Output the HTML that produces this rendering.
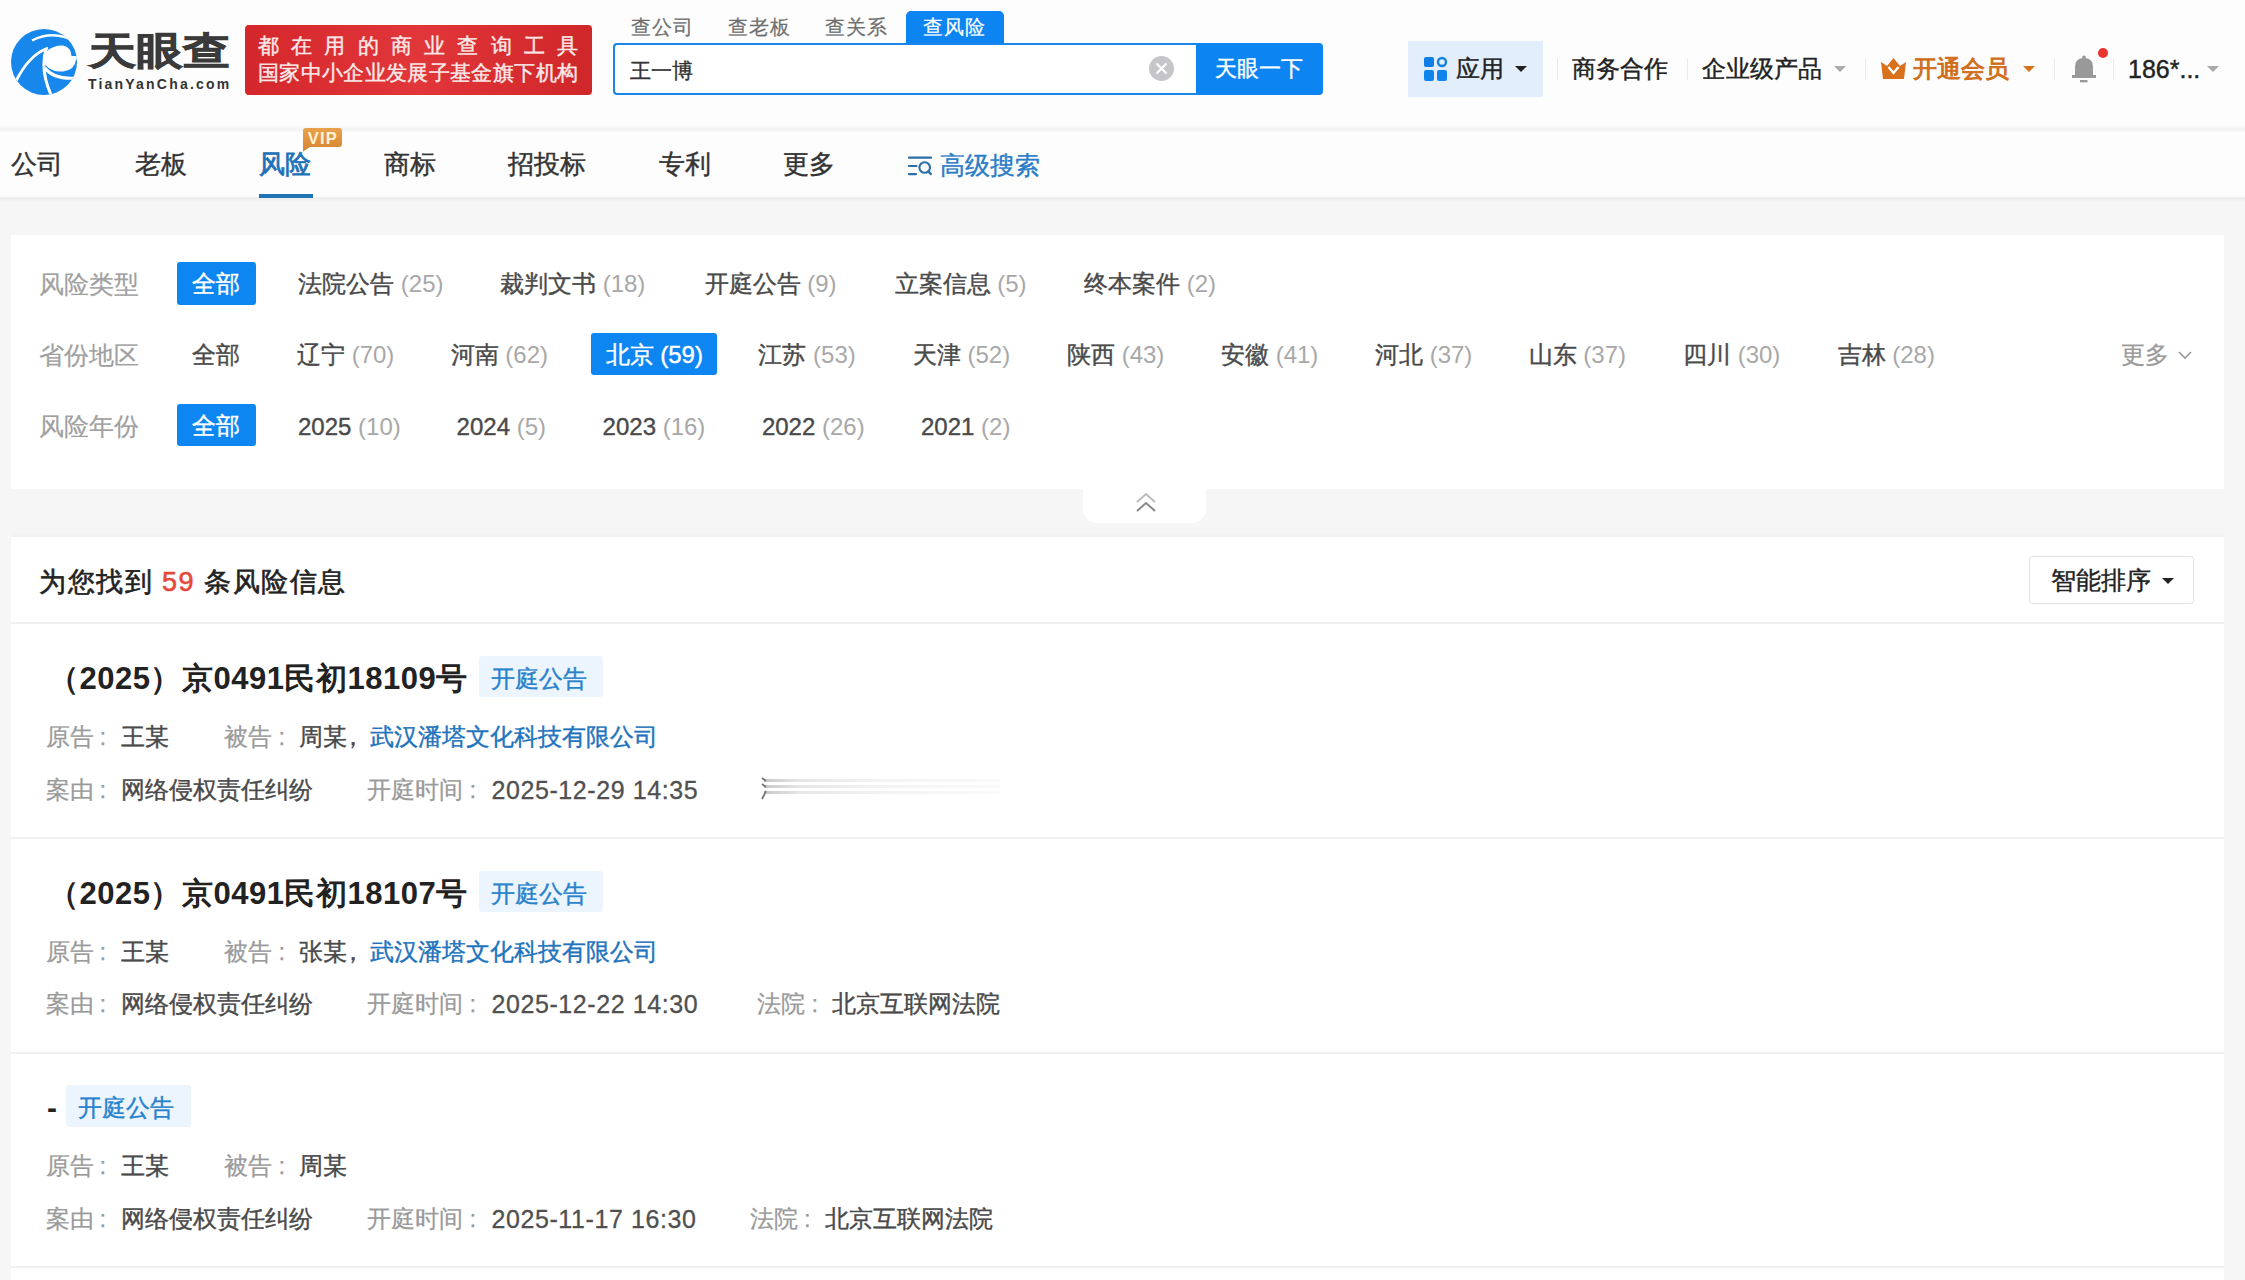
<!DOCTYPE html>
<html><head><meta charset="utf-8">
<style>
html,body{margin:0;padding:0;}
body{width:2245px;height:1280px;overflow:hidden;position:relative;background:#f6f6f6;font-family:"Liberation Sans",sans-serif;color:#333;}
.a{position:absolute;white-space:nowrap;line-height:1;}
.box{position:absolute;}
.g{color:#999;}
.n{color:#999;}
.c{margin-left:6px;}
.m{-webkit-text-stroke:0.6px currentColor;}
.s{-webkit-text-stroke:0.4px currentColor;}
.sep{position:absolute;width:1px;height:22px;background:#ebebeb;top:58px;}
.caret{position:absolute;width:0;height:0;border-left:6px solid transparent;border-right:6px solid transparent;border-top:6px solid #333;}
</style></head>
<body>
<!-- header -->
<div class="box" style="left:0;top:0;width:2245px;height:128px;background:#fdfdfd;"></div>
<div class="box" style="left:0;top:126px;width:2245px;height:8px;background:linear-gradient(#fcfcfc,#f2f2f2 35%,#f3f3f3 50%,#fdfdfd);"></div>
<div class="box" style="left:0;top:132px;width:2245px;height:66px;background:#fdfdfd;"></div>
<div class="box" style="left:0;top:197px;width:2245px;height:6px;background:linear-gradient(#ebebeb,#f6f6f6);"></div>

<!-- logo -->
<svg class="box" style="left:5px;top:22px" width="80" height="80" viewBox="0 0 80 80">
  <defs><clipPath id="cc"><circle cx="39" cy="40" r="33"/></clipPath></defs>
  <circle cx="39" cy="40" r="33" fill="#1787ec"/>
  <g clip-path="url(#cc)">
    <path d="M42 29 Q49 23 58 23.5 Q66 25 66.5 34 L74 34 L74 37.5 L71 37.5 Q70 48 58 49.5 Q47 50.5 40.5 43 Q38 35 42 29 Z" fill="#fff"/>
    <g fill="none" stroke="#fff" stroke-linecap="butt">
      <path d="M27 18.5 Q50 7 72 21" stroke-width="2.4"/>
      <path d="M11 59 Q24 33 43 26" stroke-width="2.8"/>
      <path d="M41 27 Q35 48 46 73" stroke-width="3"/>
      <path d="M40 46 Q49 58 72 56" stroke-width="3"/>
    </g>
  </g>
</svg>
<div class="a" style="left:89px;top:32px;font-size:46px;font-weight:900;color:#3a3a3a;-webkit-text-stroke:1px #3a3a3a;transform-origin:0 0;transform:scale(1.018,0.823);letter-spacing:0px">天眼查</div>
<div class="a" style="left:88px;top:77px;font-size:14px;font-weight:bold;color:#333;letter-spacing:2.2px">TianYanCha.com</div>

<!-- red badge -->
<div class="box" style="left:245px;top:25px;width:347px;height:70px;border-radius:4px;background:linear-gradient(90deg,#d3272b,#e1363a 50%,#cf2629);"></div>
<div class="a s" style="left:258px;top:35px;width:320px;font-size:21px;color:#fbe9e9;display:flex;justify-content:space-between"><span>都</span><span>在</span><span>用</span><span>的</span><span>商</span><span>业</span><span>查</span><span>询</span><span>工</span><span>具</span></div>
<div class="a s" style="left:258px;top:63px;font-size:21.3px;color:#fbe9e9;letter-spacing:0.35px">国家中小企业发展子基金旗下机构</div>

<!-- search tabs -->
<div class="a" style="left:631px;top:17px;font-size:20px;letter-spacing:1.2px;color:#6e6e6e;-webkit-text-stroke:0.2px currentColor">查公司</div>
<div class="a" style="left:728px;top:17px;font-size:20px;letter-spacing:1.2px;color:#6e6e6e;-webkit-text-stroke:0.2px currentColor">查老板</div>
<div class="a" style="left:825px;top:17px;font-size:20px;letter-spacing:1.2px;color:#6e6e6e;-webkit-text-stroke:0.2px currentColor">查关系</div>
<div class="box" style="left:906px;top:11px;width:98px;height:34px;background:#0c85f2;border-radius:5px 5px 0 0"></div>
<div class="a" style="left:923px;top:17px;font-size:20px;letter-spacing:1.2px;color:#fff;-webkit-text-stroke:0.2px currentColor">查风险</div>

<!-- search box -->
<div class="box" style="left:613px;top:43px;width:583px;height:52px;box-sizing:border-box;border:2px solid #1a86ec;border-right:none;border-radius:4px 0 0 4px;background:#fff"></div>
<div class="a s" style="left:630px;top:60px;font-size:21px;color:#333">王一博</div>
<div class="box" style="left:1149px;top:56px;width:25px;height:25px;border-radius:50%;background:#c6c6ca"></div>
<svg class="box" style="left:1149px;top:56px" width="25" height="25"><path d="M7.5 7.5 L17.5 17.5 M17.5 7.5 L7.5 17.5" stroke="#fff" stroke-width="2.2"/></svg>
<div class="box" style="left:1196px;top:43px;width:127px;height:52px;background:#0c85f2;border-radius:0 4px 4px 0"></div>
<div class="a s" style="left:1215px;top:59px;font-size:21.5px;color:#fff">天眼一下</div>

<!-- right header -->
<div class="box" style="left:1408px;top:41px;width:135px;height:56px;background:#e2eefb"></div>
<svg class="box" style="left:1422px;top:55px" width="28" height="28" viewBox="0 0 28 28">
  <rect x="2" y="2" width="10" height="10" rx="2" fill="#0f7fe6"/>
  <circle cx="20" cy="7" r="4" fill="none" stroke="#1282e0" stroke-width="2.4"/>
  <rect x="2" y="15" width="10" height="11" rx="2" fill="#0f84ec"/>
  <rect x="15" y="15" width="10" height="11" rx="2" fill="#0f84ec"/>
</svg>
<div class="a s" style="left:1456px;top:57px;font-size:24px;color:#222">应用</div>
<div class="caret" style="left:1515px;top:66px;border-top-color:#222"></div>
<div class="sep" style="left:1557px"></div>
<div class="a s" style="left:1572px;top:57px;font-size:24px;color:#222">商务合作</div>
<div class="sep" style="left:1687px"></div>
<div class="a s" style="left:1702px;top:57px;font-size:24px;color:#222">企业级产品</div>
<div class="caret" style="left:1834px;top:66px;border-top-color:#aaa"></div>
<div class="sep" style="left:1865px"></div>
<svg class="box" style="left:1880px;top:57px" width="27" height="23" viewBox="0 0 27 23">
  <path d="M1 5 L7 9 L13.5 1 L20 9 L26 5 L24 22 L3 22 Z" fill="#d9711c"/>
  <path d="M8.5 10 L13.5 16 L18.5 10" fill="none" stroke="#fff" stroke-width="2.4"/>
</svg>
<div class="a m" style="left:1913px;top:57px;font-size:24px;color:#d06d1a;-webkit-text-stroke:0.9px #d06d1a">开通会员</div>
<div class="caret" style="left:2023px;top:66px;border-top-color:#d8731b"></div>
<div class="sep" style="left:2054px"></div>
<svg class="box" style="left:2070px;top:54px" width="30" height="32" viewBox="0 0 30 32">
  <circle cx="14" cy="3.2" r="1.8" fill="#999"/>
  <path d="M5 23 L5 13 Q5 4 14 4 Q23 4 23 13 L23 23 Z" fill="#999"/>
  <rect x="2" y="21" width="24" height="3" fill="#999"/>
  <rect x="10" y="26" width="7.5" height="2.3" fill="#999"/>
</svg>
<div class="box" style="left:2098px;top:48px;width:10px;height:10px;border-radius:50%;background:#ea3430"></div>
<div class="sep" style="left:2113px"></div>
<div class="a s" style="left:2128px;top:57px;font-size:25px;color:#222">186*...</div>
<div class="caret" style="left:2207px;top:66px;border-top-color:#aaa"></div>

<!-- nav -->
<div class="a s" style="left:11px;top:151px;font-size:26px;color:#333">公司</div>
<div class="a s" style="left:135px;top:151px;font-size:26px;color:#333">老板</div>
<div class="a m" style="left:259px;top:151px;font-size:26px;color:#1f72b8;-webkit-text-stroke:0.8px #1f72b8;">风险</div>
<div class="box" style="left:259px;top:194px;width:54px;height:4px;background:#2174b4"></div>
<svg class="box" style="left:300px;top:126px" width="46" height="28" viewBox="0 0 46 28">
  <defs><linearGradient id="vg" x1="0" x2="0" y1="0" y2="1"><stop offset="0" stop-color="#e9a24c"/><stop offset="1" stop-color="#d9832e"/></linearGradient></defs>
  <path d="M6 2 H39 Q42 2 42 5 V18 Q42 21 39 21 H10 L3 25.5 V5 Q3 2 6 2 Z" fill="url(#vg)"/>
  <text x="22.8" y="17.6" font-family="Liberation Sans" font-weight="bold" font-size="16.5" letter-spacing="1.2" fill="#fff3d6" text-anchor="middle">VIP</text>
</svg>
<div class="a s" style="left:384px;top:151px;font-size:26px;color:#333">商标</div>
<div class="a s" style="left:508px;top:151px;font-size:26px;color:#333">招投标</div>
<div class="a s" style="left:659px;top:151px;font-size:26px;color:#333">专利</div>
<div class="a s" style="left:783px;top:151px;font-size:26px;color:#333">更多</div>
<svg class="box" style="left:905px;top:152px" width="30" height="26" viewBox="0 0 30 26">
  <path d="M4 5.7 H26 M4 14 H11.5 M4 22.2 H11" stroke="#2a6fa8" stroke-width="2.2" stroke-linecap="round"/>
  <circle cx="19.7" cy="15.5" r="5.3" fill="none" stroke="#2a6fa8" stroke-width="2.1"/>
  <path d="M23.4 19.4 L25.8 22" stroke="#2a6fa8" stroke-width="2.4" stroke-linecap="round"/>
</svg>
<div class="a s" style="left:940px;top:153px;font-size:25px;color:#2a7cc6">高级搜索</div>

<!-- filter card -->
<div class="box" style="left:11px;top:235px;width:2213px;height:254px;background:#fff"></div>
<div class="box" style="left:1083px;top:488px;width:123px;height:35px;background:#fff;border-radius:0 0 14px 14px"></div>
<svg class="box" style="left:1134px;top:491px" width="24" height="24" viewBox="0 0 24 24">
  <path d="M3 11 L12 3 L21 11" fill="none" stroke="#bbb" stroke-width="2"/>
  <path d="M3 20 L12 12 L21 20" fill="none" stroke="#888" stroke-width="2"/>
</svg>

<div class="a s" style="left:39px;top:271.5px;font-size:25px;color:#a0a0a0;-webkit-text-stroke:0.2px currentColor">风险类型</div>
<div class="a s" style="left:39px;top:342.5px;font-size:25px;color:#a0a0a0;-webkit-text-stroke:0.2px currentColor">省份地区</div>
<div class="a s" style="left:39px;top:413.5px;font-size:25px;color:#a0a0a0;-webkit-text-stroke:0.2px currentColor">风险年份</div>
<div class="box" style="left:177px;top:262px;width:79px;height:43px;background:#0d86f2;border-radius:3px"></div>
<div class="a s" style="left:191.6px;top:272px;font-size:24px;color:#fff;">全部</div>
<div class="a s" style="left:298.2px;top:272px;font-size:24px;color:#4a4a4a">法院公告 <span style="color:#a8a8a8;-webkit-text-stroke:0px currentColor">(25)</span></div>
<div class="a s" style="left:500px;top:272px;font-size:24px;color:#4a4a4a">裁判文书 <span style="color:#a8a8a8;-webkit-text-stroke:0px currentColor">(18)</span></div>
<div class="a s" style="left:704.5px;top:272px;font-size:24px;color:#4a4a4a">开庭公告 <span style="color:#a8a8a8;-webkit-text-stroke:0px currentColor">(9)</span></div>
<div class="a s" style="left:894.6px;top:272px;font-size:24px;color:#4a4a4a">立案信息 <span style="color:#a8a8a8;-webkit-text-stroke:0px currentColor">(5)</span></div>
<div class="a s" style="left:1084px;top:272px;font-size:24px;color:#4a4a4a">终本案件 <span style="color:#a8a8a8;-webkit-text-stroke:0px currentColor">(2)</span></div>
<div class="a s" style="left:191.6px;top:343px;font-size:24px;color:#4a4a4a;">全部</div>
<div class="box" style="left:591px;top:333px;width:126px;height:42px;background:#0d86f2;border-radius:3px"></div>
<div class="a s" style="left:297px;top:343px;font-size:24px;color:#4a4a4a">辽宁 <span style="color:#a8a8a8;-webkit-text-stroke:0px currentColor">(70)</span></div>
<div class="a s" style="left:450.7px;top:343px;font-size:24px;color:#4a4a4a">河南 <span style="color:#a8a8a8;-webkit-text-stroke:0px currentColor">(62)</span></div>
<div class="a s" style="left:605.6px;top:343px;font-size:24px;color:#fff">北京 <span style="color:#fff;-webkit-text-stroke:0.4px currentColor">(59)</span></div>
<div class="a s" style="left:758.4px;top:343px;font-size:24px;color:#4a4a4a">江苏 <span style="color:#a8a8a8;-webkit-text-stroke:0px currentColor">(53)</span></div>
<div class="a s" style="left:912.8px;top:343px;font-size:24px;color:#4a4a4a">天津 <span style="color:#a8a8a8;-webkit-text-stroke:0px currentColor">(52)</span></div>
<div class="a s" style="left:1067px;top:343px;font-size:24px;color:#4a4a4a">陕西 <span style="color:#a8a8a8;-webkit-text-stroke:0px currentColor">(43)</span></div>
<div class="a s" style="left:1221px;top:343px;font-size:24px;color:#4a4a4a">安徽 <span style="color:#a8a8a8;-webkit-text-stroke:0px currentColor">(41)</span></div>
<div class="a s" style="left:1375px;top:343px;font-size:24px;color:#4a4a4a">河北 <span style="color:#a8a8a8;-webkit-text-stroke:0px currentColor">(37)</span></div>
<div class="a s" style="left:1528.7px;top:343px;font-size:24px;color:#4a4a4a">山东 <span style="color:#a8a8a8;-webkit-text-stroke:0px currentColor">(37)</span></div>
<div class="a s" style="left:1683px;top:343px;font-size:24px;color:#4a4a4a">四川 <span style="color:#a8a8a8;-webkit-text-stroke:0px currentColor">(30)</span></div>
<div class="a s" style="left:1837.6px;top:343px;font-size:24px;color:#4a4a4a">吉林 <span style="color:#a8a8a8;-webkit-text-stroke:0px currentColor">(28)</span></div>
<div class="a s" style="left:2120.5px;top:343px;font-size:24px;color:#9a9a9a;-webkit-text-stroke:0.25px currentColor">更多</div>
<svg class="box" style="left:2176px;top:348px" width="18" height="14" viewBox="0 0 18 14"><path d="M3 4 L9 10 L15 4" fill="none" stroke="#999" stroke-width="1.6"/></svg>
<div class="box" style="left:177px;top:404px;width:79px;height:42px;background:#0d86f2;border-radius:3px"></div>
<div class="a s" style="left:191.6px;top:414px;font-size:24px;color:#fff;">全部</div>
<div class="a s" style="left:298px;top:415px;font-size:24px;color:#4a4a4a">2025 <span style="color:#a8a8a8;-webkit-text-stroke:0px currentColor">(10)</span></div>
<div class="a s" style="left:456.6px;top:415px;font-size:24px;color:#4a4a4a">2024 <span style="color:#a8a8a8;-webkit-text-stroke:0px currentColor">(5)</span></div>
<div class="a s" style="left:602.6px;top:415px;font-size:24px;color:#4a4a4a">2023 <span style="color:#a8a8a8;-webkit-text-stroke:0px currentColor">(16)</span></div>
<div class="a s" style="left:761.9px;top:415px;font-size:24px;color:#4a4a4a">2022 <span style="color:#a8a8a8;-webkit-text-stroke:0px currentColor">(26)</span></div>
<div class="a s" style="left:921px;top:415px;font-size:24px;color:#4a4a4a">2021 <span style="color:#a8a8a8;-webkit-text-stroke:0px currentColor">(2)</span></div>
<div class="box shadow-r" style="left:11px;top:531px;width:2213px;height:6px;background:linear-gradient(#f6f6f6,#f1f1f1)"></div>


<!-- results card -->
<div class="box" style="left:11px;top:537px;width:2213px;height:743px;background:#fff"></div>
<div class="a m" style="left:39px;top:569px;font-size:27px;color:#222;letter-spacing:1.5px">为您找到 <span style="color:#e4483d">59</span> 条风险信息</div>
<div class="box" style="left:2029px;top:556px;width:165px;height:48px;box-sizing:border-box;border:1px solid #e3e3e3;border-radius:3px;background:#fff"></div>
<div class="a s" style="left:2051px;top:569px;font-size:24.5px;color:#222;">智能排序</div>
<div class="caret" style="left:2162px;top:578px;border-width:6px 6px 0 6px;border-top-color:#222"></div>
<div class="box" style="left:11px;top:622px;width:2213px;height:2px;background:#f0f0f0"></div>
<div class="a" style="left:48px;top:663px;font-size:31px;color:#222;font-weight:bold;letter-spacing:0.5px">（2025）京0491民初18109号</div>
<div class="box" style="left:479px;top:656.4px;width:124px;height:41px;background:#ecf5fd;border-radius:3px"></div>
<div class="a s" style="left:491.4px;top:667.0px;font-size:24px;color:#2983cc;">开庭公告</div>
<div class="a s" style="left:45.5px;top:725px;font-size:24px;color:#9a9a9a;-webkit-text-stroke:0.25px currentColor">原告<span class=c>:</span></div>
<div class="a s" style="left:120.5px;top:725px;font-size:24px;color:#4a4a4a;">王某</div>
<div class="a s" style="left:224.4px;top:725px;font-size:24px;color:#9a9a9a;-webkit-text-stroke:0.25px currentColor">被告<span class=c>:</span></div>
<div class="a s" style="left:298.9px;top:725px;font-size:24px;color:#4a4a4a;">周某<span style="margin-left:-6px">，</span></div>
<div class="a s" style="left:370.4px;top:725px;font-size:24px;color:#1f74bd;">武汉潘塔文化科技有限公司</div>
<div class="a s" style="left:45.5px;top:777.5px;font-size:24px;color:#9a9a9a;-webkit-text-stroke:0.25px currentColor">案由<span class=c>:</span></div>
<div class="a s" style="left:120.5px;top:777.5px;font-size:24px;color:#4a4a4a;">网络侵权责任纠纷</div>
<div class="a s" style="left:367.4px;top:777.5px;font-size:24px;color:#9a9a9a;-webkit-text-stroke:0.25px currentColor">开庭时间<span class=c>:</span></div>
<div class="a" style="left:491.4px;top:777.5px;font-size:25px;color:#505050;letter-spacing:0.6px;-webkit-text-stroke:0.3px currentColor">2025-12-29 14:35</div>
<svg class="box" style="left:756px;top:774px" width="250" height="30" viewBox="0 0 250 30"><defs><linearGradient id="sk" x1="0" x2="1" y1="0" y2="0"><stop offset="0" stop-color="#c8c8c8"/><stop offset="0.15" stop-color="#e6e6e6"/><stop offset="0.5" stop-color="#f3f3f3"/><stop offset="1" stop-color="#fafafa"/></linearGradient></defs><rect x="8" y="5" width="236" height="3" fill="url(#sk)"/><rect x="8" y="11" width="236" height="3" fill="url(#sk)"/><rect x="8" y="17" width="236" height="3" fill="url(#sk)"/><path d="M6 4 L10 7 M6 10 L10 13 M10 17 L6 25" stroke="#777" stroke-width="1.8" fill="none"/></svg>
<div class="box" style="left:11px;top:837px;width:2213px;height:2px;background:#f0f0f0"></div>
<div class="a" style="left:48px;top:877.5px;font-size:31px;color:#222;font-weight:bold;letter-spacing:0.5px">（2025）京0491民初18107号</div>
<div class="box" style="left:479px;top:870.9px;width:124px;height:41px;background:#ecf5fd;border-radius:3px"></div>
<div class="a s" style="left:491.4px;top:881.5px;font-size:24px;color:#2983cc;">开庭公告</div>
<div class="a s" style="left:45.5px;top:939.5px;font-size:24px;color:#9a9a9a;-webkit-text-stroke:0.25px currentColor">原告<span class=c>:</span></div>
<div class="a s" style="left:120.5px;top:939.5px;font-size:24px;color:#4a4a4a;">王某</div>
<div class="a s" style="left:224.4px;top:939.5px;font-size:24px;color:#9a9a9a;-webkit-text-stroke:0.25px currentColor">被告<span class=c>:</span></div>
<div class="a s" style="left:298.9px;top:939.5px;font-size:24px;color:#4a4a4a;">张某<span style="margin-left:-6px">，</span></div>
<div class="a s" style="left:370.4px;top:939.5px;font-size:24px;color:#1f74bd;">武汉潘塔文化科技有限公司</div>
<div class="a s" style="left:45.5px;top:992.0px;font-size:24px;color:#9a9a9a;-webkit-text-stroke:0.25px currentColor">案由<span class=c>:</span></div>
<div class="a s" style="left:120.5px;top:992.0px;font-size:24px;color:#4a4a4a;">网络侵权责任纠纷</div>
<div class="a s" style="left:367.4px;top:992.0px;font-size:24px;color:#9a9a9a;-webkit-text-stroke:0.25px currentColor">开庭时间<span class=c>:</span></div>
<div class="a" style="left:491.4px;top:992.0px;font-size:25px;color:#505050;letter-spacing:0.6px;-webkit-text-stroke:0.3px currentColor">2025-12-22 14:30</div>
<div class="a s" style="left:757.4px;top:992.0px;font-size:24px;color:#9a9a9a;-webkit-text-stroke:0.25px currentColor">法院<span class=c>:</span></div>
<div class="a s" style="left:832px;top:992.0px;font-size:24px;color:#4a4a4a;">北京互联网法院</div>
<div class="box" style="left:11px;top:1051.5px;width:2213px;height:2px;background:#f0f0f0"></div>
<div class="a" style="left:47px;top:1093px;font-size:30px;color:#222;font-weight:bold">-</div>
<div class="box" style="left:66px;top:1085px;width:125px;height:42px;background:#ecf5fd;border-radius:3px"></div>
<div class="a s" style="left:78.4px;top:1095.6px;font-size:24px;color:#2983cc;">开庭公告</div>
<div class="a s" style="left:45.5px;top:1154px;font-size:24px;color:#9a9a9a;-webkit-text-stroke:0.25px currentColor">原告<span class=c>:</span></div>
<div class="a s" style="left:120.5px;top:1154px;font-size:24px;color:#4a4a4a;">王某</div>
<div class="a s" style="left:224.4px;top:1154px;font-size:24px;color:#9a9a9a;-webkit-text-stroke:0.25px currentColor">被告<span class=c>:</span></div>
<div class="a s" style="left:298.9px;top:1154px;font-size:24px;color:#4a4a4a;">周某</div>
<div class="a s" style="left:45.5px;top:1206.5px;font-size:24px;color:#9a9a9a;-webkit-text-stroke:0.25px currentColor">案由<span class=c>:</span></div>
<div class="a s" style="left:120.5px;top:1206.5px;font-size:24px;color:#4a4a4a;">网络侵权责任纠纷</div>
<div class="a s" style="left:367.4px;top:1206.5px;font-size:24px;color:#9a9a9a;-webkit-text-stroke:0.25px currentColor">开庭时间<span class=c>:</span></div>
<div class="a" style="left:491.4px;top:1206.5px;font-size:25px;color:#505050;letter-spacing:0.6px;-webkit-text-stroke:0.3px currentColor">2025-11-17 16:30</div>
<div class="a s" style="left:750px;top:1206.5px;font-size:24px;color:#9a9a9a;-webkit-text-stroke:0.25px currentColor">法院<span class=c>:</span></div>
<div class="a s" style="left:824.6px;top:1206.5px;font-size:24px;color:#4a4a4a;">北京互联网法院</div>
<div class="box" style="left:11px;top:1266px;width:2213px;height:2px;background:#f0f0f0"></div>


</body></html>
